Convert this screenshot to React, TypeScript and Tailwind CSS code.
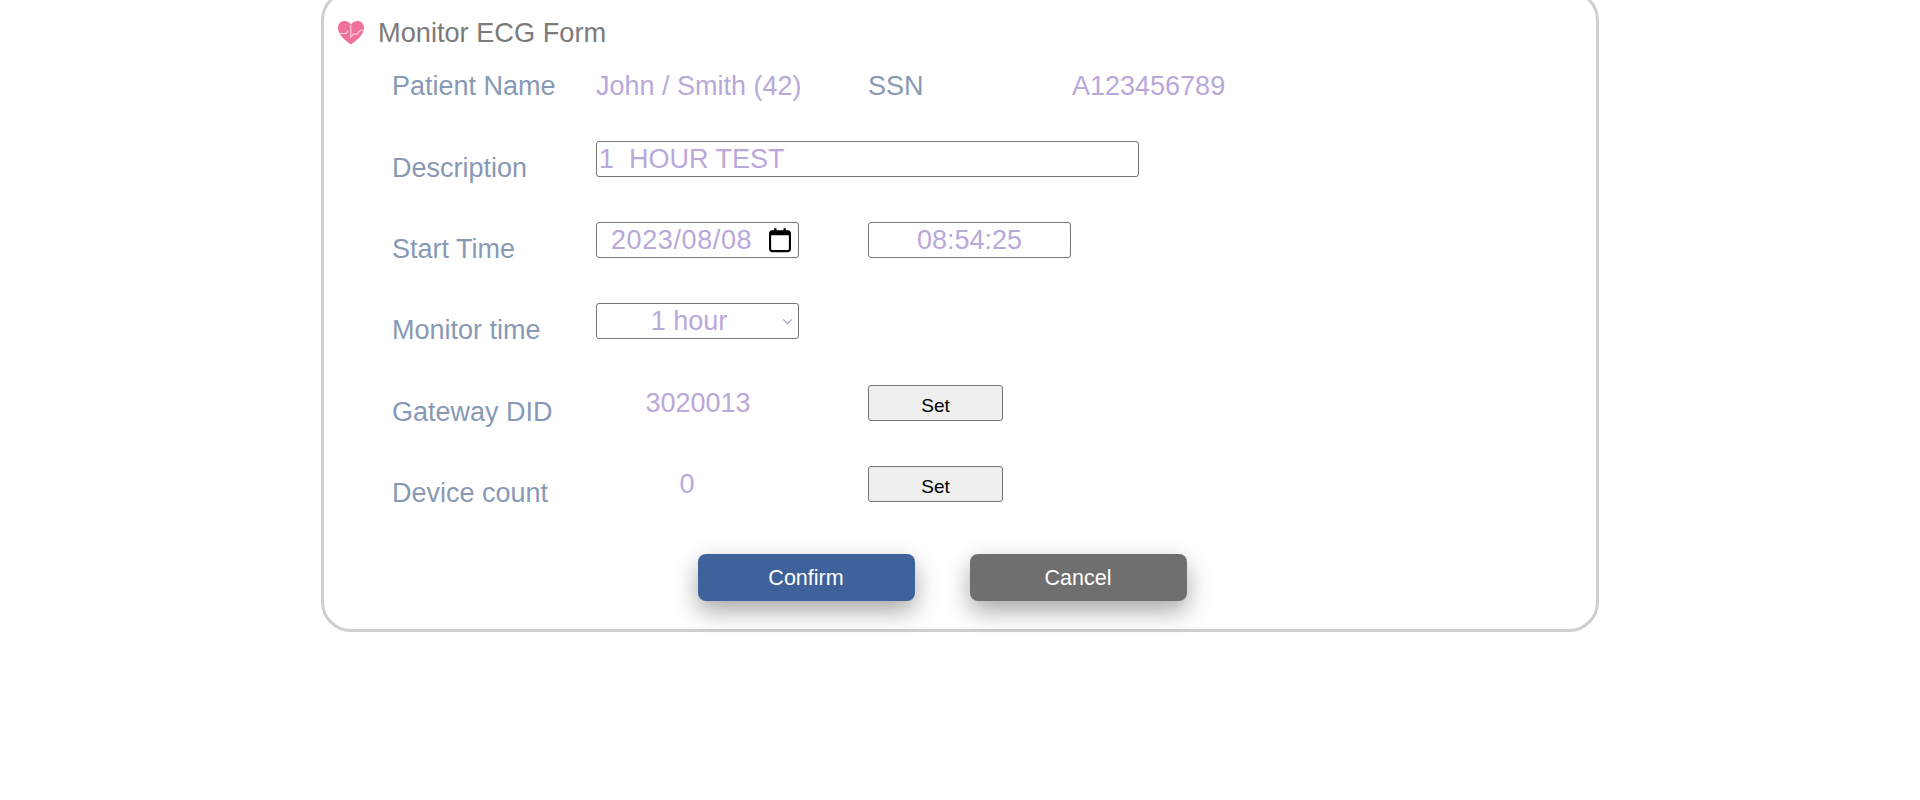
import { ReactNode } from "react";

const inputClass =
  "h-[36px] rounded-[3px] border border-[#767676] bg-white text-[27px] leading-none text-[#b9a8da] outline-none";

function Row({ label, children, className = "h-[81px]" }: { label: string; children?: ReactNode; className?: string }) {
  return (
    <div className={`flex items-start ${className}`}>
      <div className="w-[204px] shrink-0 pt-[9px] text-[27px] leading-[36px] text-[#8899b5]">{label}</div>
      {children}
    </div>
  );
}

function HeartIcon() {
  return (
    <svg viewBox="0 0 28 25" className="h-[25px] w-[28px]">
      <path
        d="M14 24.5C10 21.5 1 15.5 1 8 1 3.5 4 1 7.5 1 10.5 1 12.6 2.5 14 4.5 15.4 2.5 17.5 1 20.5 1 24 1 27 3.5 27 8 27 15.5 18 21.5 14 24.5Z"
        fill="#f0719c"
      />
      <path
        d="M1.5 13.5H8.5C10 13.5 10.5 12 11 10.5 M13.8 5V17L16.5 14C18.5 14 20 15 21 13 21.8 11 23 10 26.5 10"
        fill="none"
        stroke="#fbd3e0"
        strokeWidth="1.1"
      />
    </svg>
  );
}

function SetButton() {
  return (
    <button className="h-[36px] w-[135px] rounded-[3px] border border-[#767676] bg-[#efefef] pt-[4px] text-[19px] leading-none text-black">
      Set
    </button>
  );
}

export default function App() {
  return (
    <div className="h-[800px] overflow-hidden bg-white font-['Liberation_Sans',Arial,sans-serif]">
      <div className="mx-auto -mt-[10px] h-[642px] w-[1278px] rounded-[30px] border-[3px] border-[#cfcfcf] pl-[13px]">
        <div className="flex h-[52px] items-end gap-[13px]">
          <HeartIcon />
          <h1 className="text-[27.2px] leading-[25px] font-normal text-[#7b7b7b]">Monitor ECG Form</h1>
        </div>

        <div className="pl-[55px]">
          <div className="mt-[23px] flex h-[73px] items-start">
            <div className="w-[204px] shrink-0 text-[27px] leading-[36px] text-[#8899b5]">Patient Name</div>
            <div className="w-[272px] shrink-0 text-[27px] leading-[36px] text-[#b9a8da]">John / Smith (42)</div>
            <div className="w-[204px] shrink-0 text-[27px] leading-[36px] text-[#8899b5]">SSN</div>
            <div className="text-[27px] leading-[36px] text-[#b9a8da]">A123456789</div>
          </div>

          <Row label="Description">
            <input readOnly value="1  HOUR TEST" className={`${inputClass} w-[543px] px-[2px]`} />
          </Row>

          <Row label="Start Time">
            <div className="w-[272px] shrink-0">
              <div className={`${inputClass} flex w-[203px] items-center justify-between pr-[4px] pl-[14px]`}>
                <span className="tracking-[0.6px]">2023/08/08</span>
                <svg viewBox="0 0 24 24" className="h-[28px] w-[28px]">
                  <path
                    d="M5.2 4.5H18.8A1.7 1.7 0 0 1 20.5 6.2V19.8A1.7 1.7 0 0 1 18.8 21.5H5.2A1.7 1.7 0 0 1 3.5 19.8V6.2A1.7 1.7 0 0 1 5.2 4.5Z"
                    fill="none"
                    stroke="#000"
                    strokeWidth="1.8"
                  />
                  <path d="M3.5 5H20.5V8H3.5Z M7 2H9V5H7Z M15 2H17V5H15Z" fill="#000" />
                </svg>
              </div>
            </div>
            <input readOnly value="08:54:25" className={`${inputClass} w-[203px] text-center`} />
          </Row>

          <Row label="Monitor time" className="h-[82px]">
            <div className="relative w-[203px]">
              <select className={`${inputClass} w-full appearance-none pr-[17px] text-center`} defaultValue="1 hour">
                <option>1 hour</option>
                <option>2 hours</option>
              </select>
              <svg viewBox="0 0 12 8" className="absolute top-[15px] right-[6px] h-[7px] w-[11px]">
                <path d="M1 1.5 6 6.5 11 1.5" fill="none" stroke="#a99ac8" strokeWidth="1.2" />
              </svg>
            </div>
          </Row>

          <Row label="Gateway DID">
            <div className="w-[204px] shrink-0 text-center text-[27px] leading-[36px] text-[#b9a8da]">3020013</div>
            <div className="ml-[68px]">
              <SetButton />
            </div>
          </Row>

          <Row label="Device count">
            <div className="w-[204px] shrink-0 pr-[22px] text-center text-[27px] leading-[36px] text-[#b9a8da]">0</div>
            <div className="ml-[68px]">
              <SetButton />
            </div>
          </Row>
        </div>

        <div className="mt-[7px] flex justify-center gap-[55px] pr-[49px]">
          <button className="h-[47px] w-[217px] rounded-[8px] bg-[#3e6299] pt-[1px] text-[21.5px] text-white shadow-[0_10px_24px_rgba(0,0,0,0.35)]">
            Confirm
          </button>
          <button className="h-[47px] w-[217px] rounded-[8px] bg-[#6f6f6f] pt-[1px] text-[21.5px] text-white shadow-[0_10px_24px_rgba(0,0,0,0.35)]">
            Cancel
          </button>
        </div>
      </div>
    </div>
  );
}
